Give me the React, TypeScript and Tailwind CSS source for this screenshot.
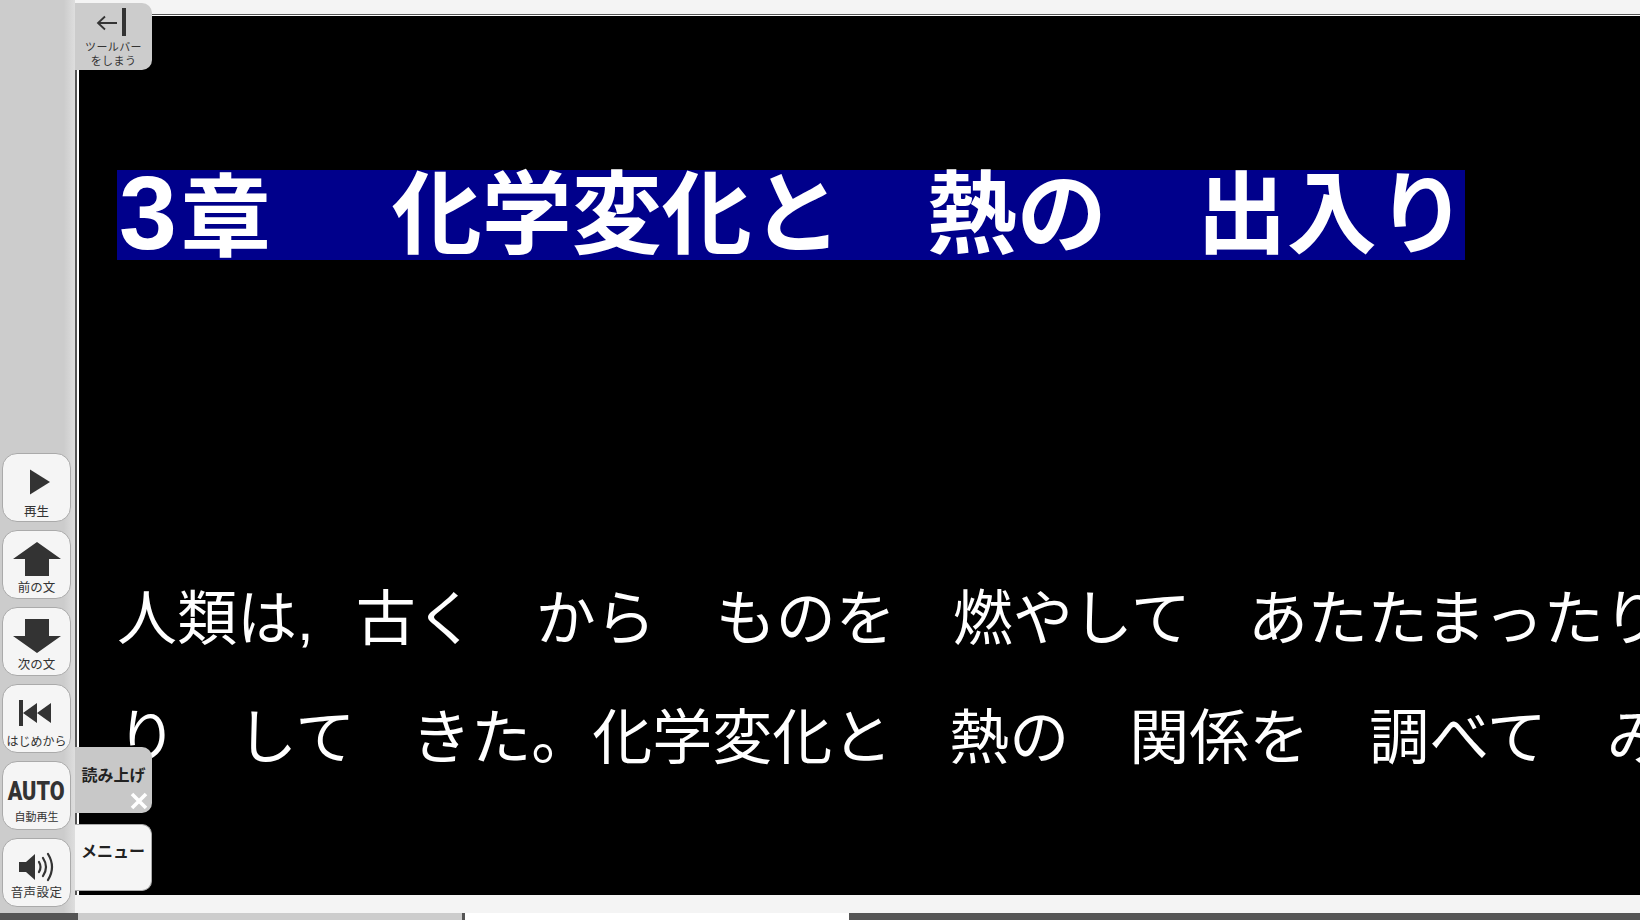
import React from "react";

const jp = "font-['Liberation_Sans','Noto_Sans_CJK_JP',sans-serif]";

function SideButton({ label, icon, labelClass }: { label: string; icon: React.ReactNode; labelClass: string }) {
  return (
    <div className="flex h-[69px] w-[69px] flex-col items-center rounded-[15px] border border-[#aaaaaa] bg-[#f5f5f5] text-[#333333]">
      <div className="flex h-[50px] w-full items-center justify-center pt-[5px]">{icon}</div>
      <div className={`leading-[14px] whitespace-nowrap ${labelClass}`}>{label}</div>
    </div>
  );
}

const TitleWord = ({ children, className = "" }: { children: React.ReactNode; className?: string }) => (
  <span className={`shrink-0 ${className}`}>{children}</span>
);

export default function App() {
  return (
    <div className={`relative flex h-[920px] w-[1640px] flex-col overflow-hidden bg-[#f4f4f4] ${jp}`}>
      <div className="flex min-h-0 flex-1">
        {/* left toolbar */}
        <aside className="flex w-[75px] shrink-0 flex-col items-start justify-end gap-[8px] bg-gradient-to-r from-[#cccccc] from-[85%] to-[#dedede] pb-[6px] pl-[2px]">
          <SideButton
            label="再生"
            labelClass="mt-[1px] text-[12.5px]"
            icon={
              <svg width="22" height="26" viewBox="0 0 22 26" className="ml-[6px]">
                <path d="M1 0.5 L21 13 L1 25.5 Z" fill="#333333" />
              </svg>
            }
          />
          <SideButton
            label="前の文"
            labelClass="text-[12.5px]"
            icon={
              <svg width="50" height="36" viewBox="0 0 50 36">
                <path d="M25 1 L49 18 L37 18 L37 35 L13 35 L13 18 L1 18 Z" fill="#333333" />
              </svg>
            }
          />
          <SideButton
            label="次の文"
            labelClass="text-[12.5px]"
            icon={
              <svg width="50" height="36" viewBox="0 0 50 36">
                <path d="M13 1 L37 1 L37 18 L49 18 L25 35 L1 18 L13 18 Z" fill="#333333" />
              </svg>
            }
          />
          <SideButton
            label="はじめから"
            labelClass="text-[12px]"
            icon={
              <svg width="34" height="26" viewBox="0 0 34 26" className="mr-[3px]">
                <path d="M1 0 H5 V26 H1 Z M5 13 L19 3 V23 Z M19 13 L33 3 V23 Z" fill="#333333" />
              </svg>
            }
          />
          <SideButton
            label="自動再生"
            labelClass="-mt-[2px] text-[11px]"
            icon={
              <span className="mt-[3px] scale-x-[0.86] font-['Roboto',sans-serif] text-[25px] leading-none font-black text-[#333333]">
                AUTO
              </span>
            }
          />
          <SideButton
            label="音声設定"
            labelClass="-mt-[3px] text-[12.5px] tracking-[0.4px]"
            icon={
              <svg width="38" height="30" viewBox="0 0 38 30">
                <path d="M1 10 H8 L17 2 V28 L8 20 H1 Z" fill="#333333" />
                <path d="M21 10 Q24 15 21 20 M25 6 Q31 15 25 24 M30 2 Q38 15 30 28" fill="none" stroke="#333333" strokeWidth="2.2" strokeLinecap="round" />
              </svg>
            }
          />
        </aside>

        {/* reading area */}
        <main className="flex min-w-0 flex-1 flex-col">
          <div className="h-[15px] shrink-0 border-b border-[#555555] bg-[#f4f4f4]" />
          <div className="h-px shrink-0 bg-white" />
          <div className="flex min-h-0 flex-1 border-l-2 border-[#555555]">
            <div className="flex min-w-0 flex-1 flex-col overflow-hidden border-l-2 border-white bg-black pl-[38px] text-white">
              <div className="mt-[154px] flex h-[90px] w-[1348px] shrink-0 items-center bg-[#00008b] text-[90px] leading-[90px] font-bold whitespace-nowrap">
                <TitleWord className="ml-[2px]">
                  <span className="mr-[4px] text-[104px] leading-[90px]">3</span>章
                </TitleWord>
                <TitleWord className="ml-[121px]">化学変化と</TitleWord>
                <TitleWord className="ml-[85px]">熱の</TitleWord>
                <TitleWord className="ml-[90px]">出入り</TitleWord>
              </div>
              <div className="mt-[300px] h-[120px] shrink-0 text-[60px] leading-[120px] whitespace-nowrap">
                人類は,<span className="ml-[42px]">古く　から　ものを　</span>
                <span className="-ml-[3px]">燃やして　</span>
                <span className="-ml-[3px]">あたたまったり</span>
              </div>
              <div className="-mt-[1px] h-[120px] shrink-0 text-[60px] leading-[120px] whitespace-nowrap">
                り　して　<span className="-ml-[4px]">きた。</span>
                <span className="ml-[1px]">化学変化と　</span>
                <span className="-ml-[3px]">熱の　関係を　調べて　み</span>
              </div>
            </div>
          </div>
          <div className="h-[18px] shrink-0 bg-[#f4f4f4]" />
        </main>
      </div>

      {/* progress bar */}
      <div className="flex h-[7px] shrink-0 bg-[#555555]">
        <div className="w-[78px] bg-[#555555]" />
        <div className="w-[384px] bg-[#cccccc]" />
        <div className="w-[3px] bg-[#555555]" />
        <div className="w-[384px] bg-white" />
      </div>

      {/* floating tabs */}
      <div className="absolute left-[75px] top-[3px] flex h-[67px] w-[77px] flex-col items-center rounded-r-[10px] bg-[#cccccc] text-[#333333]">
        <svg width="36" height="30" viewBox="0 0 36 30" className="mt-[4px] ml-[1px]">
          <path d="M2 16 H21 M9 9.5 L2 16 L9 22.5" fill="none" stroke="#333333" strokeWidth="1.8" />
          <rect x="26" y="1" width="4" height="28" fill="#333333" />
        </svg>
        <div className="mt-[3px] text-center text-[11px] leading-[14px] tracking-[0.4px]">
          ツールバー
          <br />
          をしまう
        </div>
      </div>

      <div className="absolute left-[75px] top-[747px] h-[66px] w-[77px] rounded-r-[10px] bg-[#c8c8c8]">
        <div className="mt-[19px] text-center text-[16px] leading-5 font-bold whitespace-nowrap text-[#222222]">読み上げ</div>
        <svg width="18" height="18" viewBox="0 0 18 18" className="absolute right-[4px] bottom-[3px]">
          <path d="M2 2 L16 16 M16 2 L2 16" stroke="#ffffff" strokeWidth="3.6" />
        </svg>
      </div>

      <div className="absolute left-[75px] top-[824px] h-[67px] w-[77px] rounded-r-[10px] border border-l-0 border-[#aaaaaa] bg-[#f5f5f5]">
        <div className="mt-[17px] text-center text-[16px] leading-5 font-bold whitespace-nowrap text-[#222222]">メニュー</div>
      </div>
    </div>
  );
}
